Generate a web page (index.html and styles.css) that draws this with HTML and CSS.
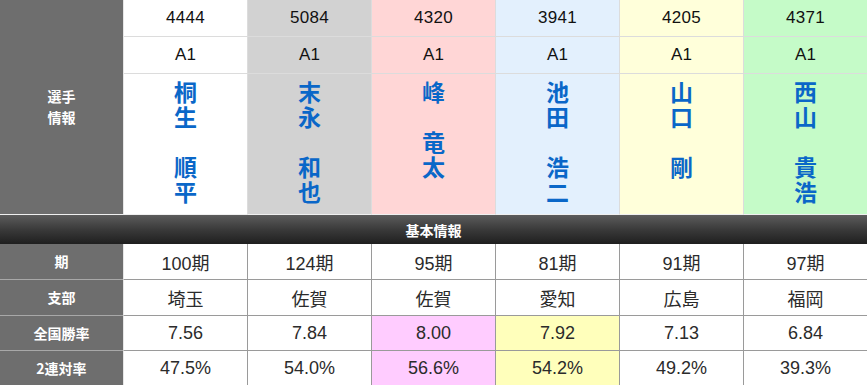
FILE: index.html
```html
<!DOCTYPE html>
<html lang="ja">
<head>
<meta charset="utf-8">
<title>選手情報</title>
<link rel="stylesheet" href="styles.css">
</head>
<body>
<table class="racers">
  <tr class="r-num">
    <th rowspan="3" class="lbl lbl-top">選手<br>情報</th>
    <td class="c1">4444</td>
    <td class="c2">5084</td>
    <td class="c3">4320</td>
    <td class="c4">3941</td>
    <td class="c5">4205</td>
    <td class="c6 last">4371</td>
  </tr>
  <tr class="r-cls">
    <td class="c1">A1</td>
    <td class="c2">A1</td>
    <td class="c3">A1</td>
    <td class="c4">A1</td>
    <td class="c5">A1</td>
    <td class="c6 last">A1</td>
  </tr>
  <tr class="r-name">
    <td class="c1 name">桐<br>生<br><br>順<br>平</td>
    <td class="c2 name">末<br>永<br><br>和<br>也</td>
    <td class="c3 name">峰<br><br>竜<br>太</td>
    <td class="c4 name">池<br>田<br><br>浩<br>二</td>
    <td class="c5 name">山<br>口<br><br>剛</td>
    <td class="c6 name last">西<br>山<br><br>貴<br>浩</td>
  </tr>
  <tr class="r-sec">
    <th colspan="7" class="section">基本情報</th>
  </tr>
  <tr class="r-data r-a">
    <th class="lbl">期</th>
    <td>100期</td><td>124期</td><td>95期</td><td>81期</td><td>91期</td><td class="last">97期</td>
  </tr>
  <tr class="r-data r-a">
    <th class="lbl">支部</th>
    <td>埼玉</td><td>佐賀</td><td>佐賀</td><td>愛知</td><td>広島</td><td class="last">福岡</td>
  </tr>
  <tr class="r-data r-b">
    <th class="lbl">全国勝率</th>
    <td>7.56</td><td>7.84</td><td class="hi-pink">8.00</td><td class="hi-yel">7.92</td><td>7.13</td><td class="last">6.84</td>
  </tr>
  <tr class="r-data r-b">
    <th class="lbl">2連対率</th>
    <td>47.5%</td><td>54.0%</td><td class="hi-pink">56.6%</td><td class="hi-yel">54.2%</td><td>49.2%</td><td class="last">39.3%</td>
  </tr>
</table>
</body>
</html>
```
FILE: styles.css
```css
html, body {
  margin: 0;
  padding: 0;
  background: #ffffff;
}

.racers {
  width: 867px;
  table-layout: fixed;
  border-collapse: separate;
  border-spacing: 0;
  font-family: "Liberation Sans", "Noto Sans CJK JP", sans-serif;
}

.racers th,
.racers td {
  box-sizing: border-box;
  width: 124px;
  padding: 0;
  text-align: center;
  vertical-align: middle;
  border-right: 1px solid #dcdcdc;
  border-bottom: 1px solid #dcdcdc;
}

.racers .last {
  border-right: none;
  width: 123px;
}

.lbl {
  background: #6e6e6e;
  color: #ffffff;
  font-family: "Noto Sans CJK JP", sans-serif;
  font-weight: bold;
  font-size: 14px;
  line-height: 21px;
  border-bottom-color: #a8a8a8 !important;
  border-right-color: #e6e6e6 !important;
}

.lbl-top {
  border-bottom-color: #f0f0f0 !important;
}

.r-num td {
  height: 37px;
  font-size: 17px;
  color: #111111;
  letter-spacing: 0.3px;
}

.r-cls td {
  height: 37px;
  font-size: 17px;
  color: #111111;
}

.r-name td {
  height: 141px;
  border-bottom-color: #f0f0f0;
}

.name {
  vertical-align: top !important;
  padding-top: 5px !important;
  font-family: "Noto Sans CJK JP", sans-serif;
  font-weight: bold;
  font-size: 23px;
  line-height: 25px;
  color: #0a67c8;
}

.c1 { background: #ffffff; }
.c2 { background: #d2d2d2; }
.c3 { background: #ffd6d6; }
.c4 { background: #e3f0fd; }
.c5 { background: #ffffda; }
.c6 { background: #c5fbc8; }

.section {
  height: 29px;
  background: linear-gradient(to bottom, #5c5c5c 0%, #3a3a3a 50%, #1f1f1f 100%);
  color: #ffffff;
  font-family: "Noto Sans CJK JP", sans-serif;
  font-weight: bold;
  font-size: 14px;
  border: none !important;
}

.r-data td {
  font-size: 18px;
  color: #2b2b2b;
  border-right-color: #9a9a9a;
  border-bottom-color: #9a9a9a;
  font-family: "Liberation Sans", "Noto Sans CJK JP", sans-serif;
}

.r-a td, .r-a th { height: 36px; }
.r-b td, .r-b th { height: 35px; }

.hi-pink { background: #ffccff; }
.hi-yel { background: #ffffbb; }
```
